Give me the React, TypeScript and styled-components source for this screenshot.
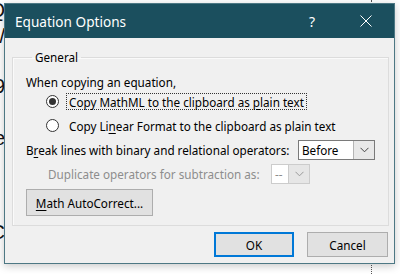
import React from "react";
import styled, { createGlobalStyle } from "styled-components";

const Global = createGlobalStyle`
  html, body { margin: 0; padding: 0; background: #ffffff; }
  body { width: 400px; height: 274px; overflow: hidden; }
  * { box-sizing: border-box; }
`;

const UI_FONT = `"Noto Sans", "Open Sans", sans-serif`;

const Page = styled.div`
  position: relative;
  width: 400px;
  height: 274px;
  background: #ffffff;
  display: flex;
  overflow: hidden;
`;

const DocColumn = styled.div`
  width: 5px;
  display: flex;
  flex-direction: column;
  align-items: flex-end;
  font-family: "Liberation Sans", sans-serif;
  font-size: 20px;
  color: #111;
  overflow: hidden;
`;

const DocGlyph = styled.div<{ $top: number }>`
  margin-top: ${(p) => p.$top}px;
  line-height: 20px;
  white-space: nowrap;
`;

const DottedRule = styled.div`
  margin-left: 366px;
  height: 100%;
  border-left: 1px dotted #555;
`;

const Dialog = styled.div`
  position: absolute;
  left: 4px;
  top: 3px;
  width: 391px;
  height: 261px;
  border: 1px solid #4d7884;
  background: #f0f0f0;
  box-shadow: 0 2px 8px rgba(0, 0, 0, 0.22);
  display: flex;
  flex-direction: column;
  font-family: ${UI_FONT};
  font-size: 11.7px;
  color: #000;
`;

const TitleBar = styled.div`
  height: 34px;
  background: #1b4f5e;
  display: flex;
  align-items: center;
  padding: 0 1px 0 10px;
  color: #ffffff;
`;

const TitleText = styled.div`
  flex: 1;
  font-size: 13.6px;
`;

const TitleButton = styled.div<{ $w: number }>`
  width: ${(p) => p.$w}px;
  height: 34px;
  display: flex;
  align-items: center;
  justify-content: center;
  font-size: 14px;
`;

const Body = styled.div`
  flex: 1;
  display: flex;
  flex-direction: column;
  padding: 11px 5px 5px 7px;
`;

const Group = styled.fieldset`
  margin: 0;
  padding: 0 13px 9px 13px;
  border: 1px solid #dcdcdc;
  box-shadow: inset 1px 1px 0 #fafafa;
  min-width: 0;
  display: flex;
  flex-direction: column;
`;

const Legend = styled.legend`
  padding: 0 3px;
  margin-left: 6px;
  line-height: 16px;
  height: 16px;
`;

const Row = styled.div<{ $mt: number; $indent?: number; $h?: number }>`
  display: flex;
  align-items: center;
  margin-top: ${(p) => p.$mt}px;
  padding-left: ${(p) => p.$indent ?? 0}px;
  height: ${(p) => p.$h ?? 20}px;
  white-space: nowrap;
`;

const Label = styled.span<{ $w?: number; $disabled?: boolean }>`
  display: inline-block;
  ${(p) => (p.$w ? `width: ${p.$w}px;` : "")}
  color: ${(p) => (p.$disabled ? "#8d8d8d" : "#000")};
`;

const RadioCircle = styled.span<{ $checked?: boolean }>`
  width: 13px;
  height: 13px;
  border-radius: 50%;
  border: 1px solid #333333;
  background: #ffffff;
  display: flex;
  align-items: center;
  justify-content: center;
  flex: none;
  &::after {
    content: "";
    width: 7px;
    height: 7px;
    border-radius: 50%;
    background: ${(p) => (p.$checked ? "#333333" : "transparent")};
  }
`;

const RadioText = styled.span<{ $focus?: boolean }>`
  margin-left: 7px;
  padding: 0 2px;
  height: 17px;
  line-height: 16px;
  border: 1px ${(p) => (p.$focus ? "dotted #333" : "solid transparent")};
`;

const U = styled.span`
  text-decoration: underline;
  text-underline-offset: 2px;
`;

const Select = styled.div<{ $w: number; $disabled?: boolean }>`
  width: ${(p) => p.$w}px;
  height: 20px;
  display: flex;
  background: #ffffff;
  border: 1px solid ${(p) => (p.$disabled ? "#cccccc" : "#7a7a7a")};
  color: ${(p) => (p.$disabled ? "#8d8d8d" : "#000")};
`;

const SelectValue = styled.div`
  flex: 1;
  padding-left: 3px;
  line-height: 18px;
`;

const SelectArrow = styled.div<{ $disabled?: boolean }>`
  width: 21px;
  border-left: 1px solid ${(p) => (p.$disabled ? "#cccccc" : "#b5b5b5")};
  background: ${(p) => (p.$disabled ? "#e6e6e6" : "#e8e8e8")};
  display: flex;
  align-items: center;
  justify-content: center;
`;

const Button = styled.div<{ $w: number; $h?: number; $default?: boolean }>`
  width: ${(p) => p.$w}px;
  height: ${(p) => p.$h ?? 25}px;
  background: #e1e1e1;
  border: ${(p) => (p.$default ? "2px solid #0078d7" : "1px solid #adadad")};
  display: flex;
  align-items: center;
  justify-content: center;
`;

const ButtonRow = styled.div`
  display: flex;
  justify-content: flex-end;
  gap: 13px;
  margin-top: 6px;
  padding-right: 1px;
`;

const Chevron = ({ color }: { color: string }) => (
  <svg width="9" height="6" viewBox="0 0 9 6">
    <path d="M0.5 0.8 L4.5 4.8 L8.5 0.8" fill="none" stroke={color} strokeWidth="1" />
  </svg>
);

export default function App() {
  return (
    <>
      <Global />
      <Page>
        <DocColumn>
          <DocGlyph $top={0}>Q</DocGlyph>
          <DocGlyph $top={6}>/</DocGlyph>
          <DocGlyph $top={30}>9</DocGlyph>
          <DocGlyph $top={32}>e</DocGlyph>
          <DocGlyph $top={74}>C</DocGlyph>
        </DocColumn>
        <DottedRule />
        <Dialog>
          <TitleBar>
            <TitleText>Equation Options</TitleText>
            <TitleButton $w={54}>?</TitleButton>
            <TitleButton $w={54}>
              <svg width="12" height="12" viewBox="0 0 12 12">
                <path d="M0.5 0.5 L11.5 11.5 M11.5 0.5 L0.5 11.5" stroke="#ffffff" strokeWidth="1" fill="none" />
              </svg>
            </TitleButton>
          </TitleBar>
          <Body>
            <Group>
              <Legend>General</Legend>
              <Row $mt={9} $h={16}>
                <Label>When copying an equation,</Label>
              </Row>
              <Row $mt={1} $indent={20}>
                <RadioCircle $checked />
                <RadioText $focus>
                  Copy MathML to the clipboard as <U>p</U>lain text
                </RadioText>
              </Row>
              <Row $mt={4} $indent={20}>
                <RadioCircle />
                <RadioText>
                  Copy Li<U>n</U>ear Format to the clipboard as plain text
                </RadioText>
              </Row>
              <Row $mt={5}>
                <Label $w={272}>
                  B<U>r</U>eak lines with binary and relational operators:
                </Label>
                <Select $w={77}>
                  <SelectValue>Before</SelectValue>
                  <SelectArrow>
                    <Chevron color="#444" />
                  </SelectArrow>
                </Select>
              </Row>
              <Row $mt={4} $indent={22}>
                <Label $w={223} $disabled>
                  Duplicate operators for subtraction as:
                </Label>
                <Select $w={39} $disabled>
                  <SelectValue>--</SelectValue>
                  <SelectArrow $disabled>
                    <Chevron color="#999" />
                  </SelectArrow>
                </Select>
              </Row>
              <Row $mt={5} $h={27}>
                <Button $w={127} $h={27}>
                  <span>
                    <U>M</U>ath AutoCorrect...
                  </span>
                </Button>
              </Row>
            </Group>
            <ButtonRow>
              <Button $w={80} $default>OK</Button>
              <Button $w={81}>Cancel</Button>
            </ButtonRow>
          </Body>
        </Dialog>
      </Page>
    </>
  );
}
